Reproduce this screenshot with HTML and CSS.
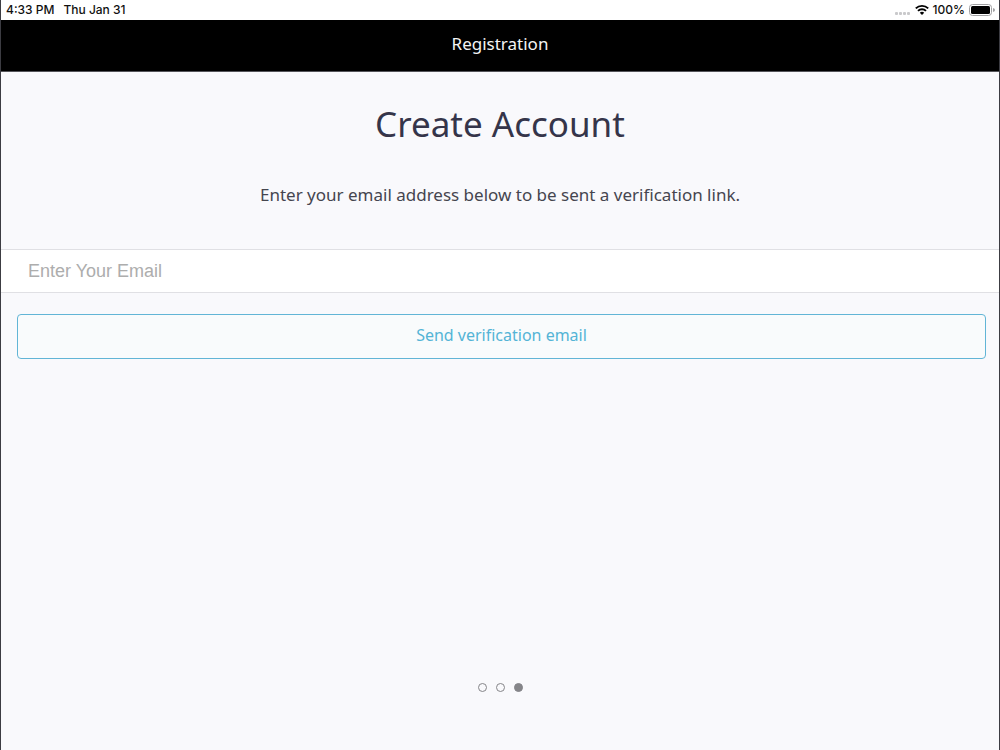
FILE: index.html
```html
<!DOCTYPE html>
<html lang="en">
<head>
<meta charset="utf-8">
<meta name="viewport" content="width=device-width, initial-scale=1">
<title>Registration</title>
<link rel="stylesheet" href="styles.css">
</head>
<body>
<div class="screen">
  <div class="status-bar">
    <div class="status-group status-time"><span>4:33 PM</span><span>Thu Jan 31</span></div>
    <div class="status-group status-icons">
      <svg class="signal" width="16" height="12" viewBox="0 0 16 12" aria-hidden="true"><g fill="#c9c9cb"><rect x="0" y="8" width="3" height="3" rx="1"/><rect x="4" y="8" width="3" height="3" rx="1"/><rect x="8" y="8" width="3" height="3" rx="1"/><rect x="12" y="8" width="3" height="3" rx="1"/></g></svg>
      <svg class="wifi" width="14" height="12" viewBox="0 0 14 12" aria-hidden="true"><g fill="none" stroke="#000" stroke-width="1.9"><path d="M.8 4.4a8.8 8.8 0 0 1 12.4 0"/><path d="M3 6.9a5.7 5.7 0 0 1 8 0"/></g><path d="M4.8 8.8a3.1 3.1 0 0 1 4.4 0L7 11z"/></svg>
      <span>100%</span>
      <svg class="battery" width="26" height="12" viewBox="0 0 26 12" aria-hidden="true"><rect x=".5" y=".5" width="22" height="11" rx="3" fill="#fff" stroke="#a0a0a2"/><rect x="2" y="2" width="19" height="8" rx="1.5"/><path d="M24 4q2 .4 2 2t-2 2z" fill="#a0a0a2"/></svg>
    </div>
  </div>
  <header class="nav-bar">Registration</header>
  <main class="content">
    <h1 class="title">Create Account</h1>
    <p class="intro">Enter your email address below to be sent a verification link.</p>
    <form class="form">
      <input class="email" type="email" placeholder="Enter Your Email" aria-label="Enter Your Email">
      <button class="send" type="button">Send verification email</button>
    </form>
    <div class="dots"><span class="dot"></span><span class="dot"></span><span class="dot dot-active"></span></div>
  </main>
</div>
</body>
</html>
```
FILE: styles.css
```css
* { box-sizing: border-box; }
body { margin: 0; font-family: "Noto Sans", sans-serif; color: #45454f; }
.screen {
  display: flex;
  flex-direction: column;
  min-height: 100vh;
  background: #f9f9fc;
  border: solid #3c3c42;
  border-width: 0 1px;
}
.status-bar {
  display: flex;
  justify-content: space-between;
  align-items: center;
  height: 20px;
  padding: 0 4px 0 5px;
  background: #fff;
  color: #111;
  font: 500 12px/20px Inter, sans-serif;
}
.status-group { display: flex; align-items: center; }
.status-time { gap: 9px; }
.status-icons { gap: 4px; }
.nav-bar {
  height: 52px;
  background: #000;
  border-bottom: 1px solid #55555a;
  color: #f4f4f4;
  font-size: 17px;
  line-height: 48px;
  text-align: center;
}
.content { display: flex; flex-direction: column; flex: 1; }
.title {
  margin: 28px 0 0;
  color: #35354a;
  font-size: 35px;
  font-weight: 400;
  line-height: 48px;
  text-align: center;
}
.intro {
  margin: 35px 16px 0;
  font-size: 17px;
  line-height: 24px;
  text-align: center;
}
.form { display: flex; flex-direction: column; margin-top: 42px; }
.email {
  width: 100%;
  height: 44px;
  padding: 0 27px;
  background: #fff;
  border: solid #e0e0e4;
  border-width: 1px 0;
  border-radius: 0;
  font: 18px "Liberation Sans", Arial, sans-serif;
  color: #333;
  outline: none;
}
.email::placeholder { color: #adadad; opacity: 1; }
.send {
  height: 45px;
  margin: 21px 13px 0 16px;
  padding: 0 0 4px;
  background: #f9fbfc;
  border: 1px solid #62b5d6;
  border-radius: 4px;
  color: #54b4d6;
  font: 16px "Noto Sans", sans-serif;
}
.dots { display: flex; justify-content: center; gap: 9px; margin: auto 0 58px; }
.dot { width: 9px; height: 9px; border: 1px solid #858589; border-radius: 50%; }
.dot-active { background: #858589; }
```
